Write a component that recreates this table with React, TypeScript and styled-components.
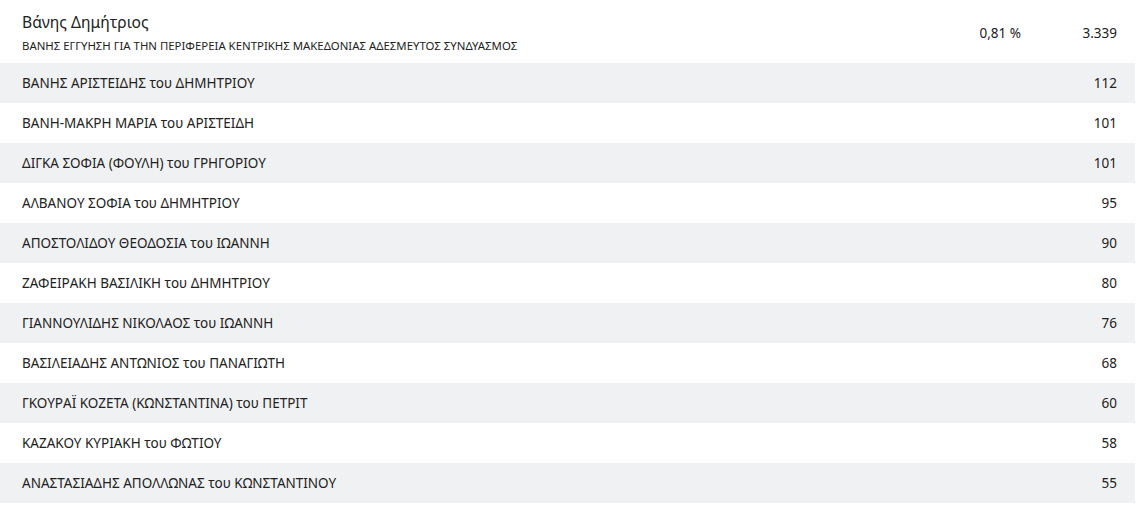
import styled, { createGlobalStyle } from "styled-components";

const GlobalStyle = createGlobalStyle`
  body {
    margin: 0;
    background: #fff;
    font-family: "Noto Sans", "Open Sans", sans-serif;
    color: #222;
  }
`;

const Table = styled.div`
  width: 1135px;
`;

const Header = styled.div`
  display: flex;
  align-items: center;
  height: 63px;
  padding: 0 18px 0 22px;
  box-sizing: border-box;
`;

const Candidate = styled.div`
  flex: 1;
  align-self: flex-start;
  padding-top: 13px;
  display: flex;
  flex-direction: column;
  gap: 8px;
`;

const Name = styled.div`
  font-size: 15.6px;
  line-height: 18px;
`;

const Party = styled.div`
  font-size: 11.4px;
  line-height: 14px;
`;

const Figure = styled.div`
  font-size: 13.5px;
  width: 96px;
  padding-top: 3px;
  text-align: right;
`;

const Row = styled.div<{ $shade: boolean }>`
  display: flex;
  align-items: center;
  justify-content: space-between;
  height: 40px;
  padding: 0 18px 0 22px;
  font-size: 13.5px;
  background: ${({ $shade }) => ($shade ? "#f0f1f3" : "#fff")};
`;

const rows: [string, number][] = [
  ["ΒΑΝΗΣ ΑΡΙΣΤΕΙΔΗΣ του ΔΗΜΗΤΡΙΟΥ", 112],
  ["ΒΑΝΗ-ΜΑΚΡΗ ΜΑΡΙΑ του ΑΡΙΣΤΕΙΔΗ", 101],
  ["ΔΙΓΚΑ ΣΟΦΙΑ (ΦΟΥΛΗ) του ΓΡΗΓΟΡΙΟΥ", 101],
  ["ΑΛΒΑΝΟΥ ΣΟΦΙΑ του ΔΗΜΗΤΡΙΟΥ", 95],
  ["ΑΠΟΣΤΟΛΙΔΟΥ ΘΕΟΔΟΣΙΑ του ΙΩΑΝΝΗ", 90],
  ["ΖΑΦΕΙΡΑΚΗ ΒΑΣΙΛΙΚΗ του ΔΗΜΗΤΡΙΟΥ", 80],
  ["ΓΙΑΝΝΟΥΛΙΔΗΣ ΝΙΚΟΛΑΟΣ του ΙΩΑΝΝΗ", 76],
  ["ΒΑΣΙΛΕΙΑΔΗΣ ΑΝΤΩΝΙΟΣ του ΠΑΝΑΓΙΩΤΗ", 68],
  ["ΓΚΟΥΡΑΪ ΚΟΖΕΤΑ (ΚΩΝΣΤΑΝΤΙΝΑ) του ΠΕΤΡΙΤ", 60],
  ["ΚΑΖΑΚΟΥ ΚΥΡΙΑΚΗ του ΦΩΤΙΟΥ", 58],
  ["ΑΝΑΣΤΑΣΙΑΔΗΣ ΑΠΟΛΛΩΝΑΣ του ΚΩΝΣΤΑΝΤΙΝΟΥ", 55],
];

export default function App() {
  return (
    <>
      <GlobalStyle />
      <Table>
        <Header>
          <Candidate>
            <Name>Βάνης Δημήτριος</Name>
            <Party>
              ΒΑΝΗΣ ΕΓΓΥΗΣΗ ΓΙΑ ΤΗΝ ΠΕΡΙΦΕΡΕΙΑ ΚΕΝΤΡΙΚΗΣ ΜΑΚΕΔΟΝΙΑΣ ΑΔΕΣΜΕΥΤΟΣ ΣΥΝΔΥΑΣΜΟΣ
            </Party>
          </Candidate>
          <Figure>0,81 %</Figure>
          <Figure>3.339</Figure>
        </Header>
        {rows.map(([name, votes], i) => (
          <Row key={name} $shade={i % 2 === 0}>
            <span>{name}</span>
            <span>{votes}</span>
          </Row>
        ))}
      </Table>
    </>
  );
}
